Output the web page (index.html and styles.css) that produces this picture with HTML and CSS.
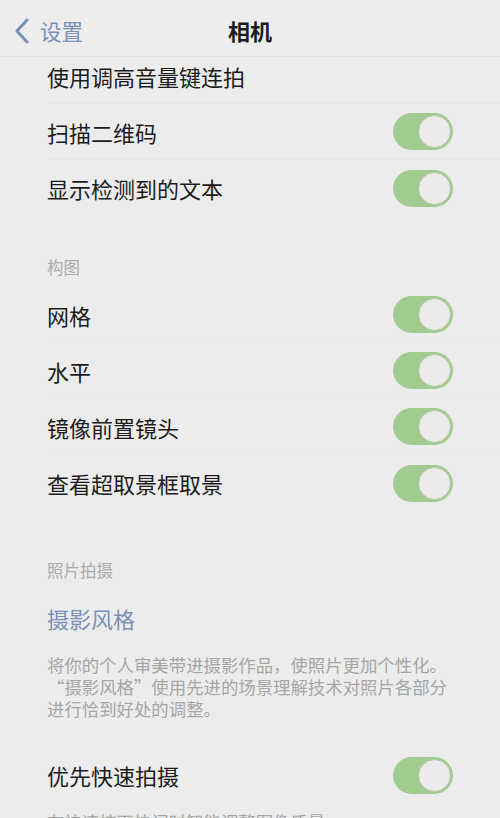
FILE: index.html
```html
<!DOCTYPE html>
<html lang="zh-CN">
<head>
  <meta charset="UTF-8">
  <meta name="viewport" content="width=device-width, initial-scale=1.0">
  <title>相机</title>
  <link rel="stylesheet" href="styles.css">
</head>
<body>
  <div class="navbar">
    <a class="back" href="#">
      <svg width="16" height="26" viewBox="0 0 16 26">
        <polyline points="13,2 3,13 13,24" fill="none" stroke="#7a90b6" stroke-width="3" stroke-linecap="round" stroke-linejoin="round"/>
      </svg>
      <span>设置</span>
    </a>
    <h1>相机</h1>
  </div>

  <div class="content">
    <div class="group">
      <div class="row">
        <span>使用调高音量键连拍</span>
      </div>
      <div class="row">
        <span>扫描二维码</span>
        <div class="toggle on"><div class="knob"></div></div>
      </div>
      <div class="row last">
        <span>显示检测到的文本</span>
        <div class="toggle on"><div class="knob"></div></div>
      </div>
    </div>

    <div class="section-title first">构图</div>
    <div class="group">
      <div class="row">
        <span>网格</span>
        <div class="toggle on"><div class="knob"></div></div>
      </div>
      <div class="row">
        <span>水平</span>
        <div class="toggle on"><div class="knob"></div></div>
      </div>
      <div class="row">
        <span>镜像前置镜头</span>
        <div class="toggle on"><div class="knob"></div></div>
      </div>
      <div class="row last">
        <span>查看超取景框取景</span>
        <div class="toggle on"><div class="knob"></div></div>
      </div>
    </div>

    <div class="section-title">照片拍摄</div>
    <div class="group">
      <div class="row last">
        <span class="link">摄影风格</span>
      </div>
    </div>
    <p class="footnote">将你的个人审美带进摄影作品，使照片更加个性化。“摄影风格”使用先进的场景理解技术对照片各部分进行恰到好处的调整。</p>

    <div class="group spaced">
      <div class="row last">
        <span>优先快速拍摄</span>
        <div class="toggle on"><div class="knob"></div></div>
      </div>
    </div>
    <p class="footnote">在快速按下快门时智能调整图像质量。</p>
  </div>
</body>
</html>
```

FILE: styles.css
```css
* {
  margin: 0;
  padding: 0;
  box-sizing: border-box;
}

body {
  font-family: "Noto Sans CJK SC", "Noto Sans", sans-serif;
  background-color: #ececec;
  color: #1c1c1c;
  width: 500px;
  height: 818px;
  overflow: hidden;
}

.navbar {
  position: relative;
  z-index: 1;
  height: 57px;
  display: flex;
  align-items: center;
  justify-content: center;
  background-color: rgba(236, 236, 236, 0.96);
  border-bottom: 1px solid #e0e0e0;
}

.navbar h1 {
  font-size: 22px;
  font-weight: 700;
  line-height: 1;
  padding-top: 3px;
}

.back {
  position: absolute;
  left: 14px;
  top: 18px;
  display: flex;
  align-items: center;
  gap: 10px;
  color: #7a90b6;
  text-decoration: none;
  font-size: 21.5px;
  line-height: 1;
}

.content {
  margin-top: -9px;
}

.group {
  padding-left: 47px;
}

.row {
  height: 56px;
  display: flex;
  align-items: center;
  justify-content: space-between;
  padding-right: 47px;
  font-size: 22px;
  border-bottom: 1px solid #e7e7e7;
}

.row.last {
  border-bottom: none;
}

.row .link {
  color: #7a90b6;
}

.section-title {
  padding: 48px 47px 9px;
  font-size: 16.5px;
  line-height: 22px;
  color: #ababab;
}

.section-title.first {
  padding-top: 40px;
}

.footnote {
  padding: 8px 40px 0 47px;
  font-size: 17.4px;
  line-height: 22px;
  color: #a6a6a6;
}

.spaced {
  margin-top: 27px;
}

.toggle {
  width: 60px;
  height: 37px;
  border-radius: 19px;
  background-color: #a1cc8f;
  display: flex;
  align-items: center;
  justify-content: flex-end;
  padding: 2px;
}

.knob {
  width: 33px;
  height: 33px;
  border-radius: 50%;
  background-color: #ebebeb;
  border: 1.5px solid #b3c4a6;
}
```
